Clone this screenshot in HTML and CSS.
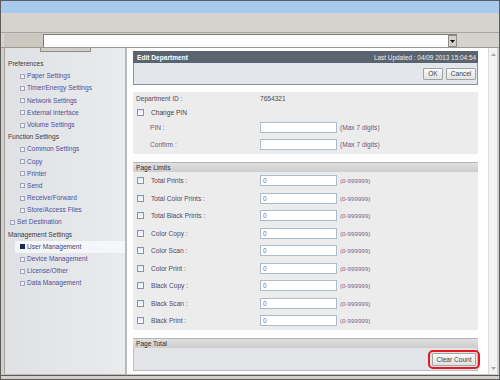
FILE: index.html
```html
<!DOCTYPE html>
<html lang="en">
<head>
  <meta charset="UTF-8">
  <meta name="viewport" content="width=device-width, initial-scale=1.0">
  <title>Edit Department</title>
  <link rel="stylesheet" href="styles.css">
</head>
<body>
  <div class="window">
    <div class="titlebar"></div>
    <div class="toolbar"></div>

    <div class="addressbar">
      <div class="addr-left"></div>
      <div class="addr-field">
        <span class="addr-drop">
          <svg width="5" height="3" viewBox="0 0 5 3"><path d="M0 0H5L2.5 3Z" fill="#111"/></svg>
        </span>
      </div>
    </div>

    <div class="workspace">
      <!-- Settings menu -->
      <nav class="sidebar">
        <div class="sidebar-tab"></div>
        <ul class="menu">
          <li class="menu-head">Preferences</li>
          <li class="menu-item"><span class="bullet"></span>Paper Settings</li>
          <li class="menu-item"><span class="bullet"></span>Timer/Energy Settings</li>
          <li class="menu-item"><span class="bullet"></span>Network Settings</li>
          <li class="menu-item"><span class="bullet"></span>External Interface</li>
          <li class="menu-item"><span class="bullet"></span>Volume Settings</li>
          <li class="menu-head">Function Settings</li>
          <li class="menu-item"><span class="bullet"></span>Common Settings</li>
          <li class="menu-item"><span class="bullet"></span>Copy</li>
          <li class="menu-item"><span class="bullet"></span>Printer</li>
          <li class="menu-item"><span class="bullet"></span>Send</li>
          <li class="menu-item"><span class="bullet"></span>Receive/Forward</li>
          <li class="menu-item"><span class="bullet"></span>Store/Access Files</li>
          <li class="menu-item top"><span class="bullet"></span>Set Destination</li>
          <li class="menu-head">Management Settings</li>
          <li class="menu-item active"><span class="bullet"></span>User Management</li>
          <li class="menu-item"><span class="bullet"></span>Device Management</li>
          <li class="menu-item"><span class="bullet"></span>License/Other</li>
          <li class="menu-item"><span class="bullet"></span>Data Management</li>
        </ul>
      </nav>

      <main class="main">
        <div class="panel">
          <div class="panel-head">
            <span class="panel-title">Edit Department</span>
            <span class="panel-updated">Last Updated : 04/09 2013 15:04:54</span>
          </div>
          <div class="panel-actions">
            <button class="btn btn-ok">OK</button>
            <button class="btn btn-cancel">Cancel</button>
          </div>

          <!-- Department -->
          <div class="section dept">
            <div class="row r1">
              <div class="label-cell"><span class="label id-label">Department ID :</span></div>
              <span class="value">7654321</span>
            </div>
            <div class="row r2">
              <div class="label-cell"><span class="check"></span><span class="label dark">Change PIN</span></div>
            </div>
            <div class="row r3">
              <div class="label-cell indent"><span class="label soft">PIN :</span></div>
              <input class="field" type="text" value="">
              <span class="note">(Max 7 digits)</span>
            </div>
            <div class="row r4">
              <div class="label-cell indent"><span class="label soft">Confirm :</span></div>
              <input class="field" type="text" value="">
              <span class="note">(Max 7 digits)</span>
            </div>
          </div>

          <!-- Page Limits -->
          <div class="section-head">Page Limits</div>
          <div class="section limits">
            <div class="row limit">
              <div class="label-cell"><span class="check"></span><span class="label">Total Prints :</span></div>
              <input class="field" type="text" value="0"><span class="range">(0-999999)</span>
            </div>
            <div class="row limit">
              <div class="label-cell"><span class="check"></span><span class="label">Total Color Prints :</span></div>
              <input class="field" type="text" value="0"><span class="range">(0-999999)</span>
            </div>
            <div class="row limit">
              <div class="label-cell"><span class="check"></span><span class="label">Total Black Prints :</span></div>
              <input class="field" type="text" value="0"><span class="range">(0-999999)</span>
            </div>
            <div class="row limit">
              <div class="label-cell"><span class="check"></span><span class="label">Color Copy :</span></div>
              <input class="field" type="text" value="0"><span class="range">(0-999999)</span>
            </div>
            <div class="row limit">
              <div class="label-cell"><span class="check"></span><span class="label">Color Scan :</span></div>
              <input class="field" type="text" value="0"><span class="range">(0-999999)</span>
            </div>
            <div class="row limit">
              <div class="label-cell"><span class="check"></span><span class="label">Color Print :</span></div>
              <input class="field" type="text" value="0"><span class="range">(0-999999)</span>
            </div>
            <div class="row limit">
              <div class="label-cell"><span class="check"></span><span class="label">Black Copy :</span></div>
              <input class="field" type="text" value="0"><span class="range">(0-999999)</span>
            </div>
            <div class="row limit">
              <div class="label-cell"><span class="check"></span><span class="label">Black Scan :</span></div>
              <input class="field" type="text" value="0"><span class="range">(0-999999)</span>
            </div>
            <div class="row limit">
              <div class="label-cell"><span class="check"></span><span class="label">Black Print :</span></div>
              <input class="field" type="text" value="0"><span class="range">(0-999999)</span>
            </div>
          </div>

          <!-- Page Total -->
          <div class="section-head total-head">Page Total</div>
          <div class="total-body">
            <span class="highlight"><button class="btn btn-clear">Clear Count</button></span>
          </div>
        </div>
      </main>

      <div class="scrollbar">
        <svg width="5" height="3" viewBox="0 0 5 3"><path d="M0 3H5L2.5 0Z" fill="#a8a8a8"/></svg>
        <svg width="5" height="3" viewBox="0 0 5 3"><path d="M0 0H5L2.5 3Z" fill="#a8a8a8"/></svg>
      </div>
    </div>

    <div class="statusbar"></div>
  </div>
</body>
</html>
```

FILE: styles.css
```css
* {
  box-sizing: border-box;
}

body {
  margin: 0;
  font-family: 'Liberation Sans', Arial, sans-serif;
  font-size: 6.6px;
}

.window {
  width: 500px;
  height: 380px;
  border: 1px solid #5c5c5c;
  background-color: #d4d0c8;
  display: flex;
  flex-direction: column;
  overflow: hidden;
}

.titlebar {
  height: 12px;
  background-color: #a6c9ed;
}

.toolbar {
  height: 20px;
  background-color: #d6d3ce;
  border-bottom: 1px solid #a9a59e;
}

/* Address row */
.addressbar {
  height: 15px;
  display: flex;
  border-bottom: 1px solid #9c988f;
  background-color: #d6d3ce;
}

.addr-left {
  width: 39px;
  margin-left: 3px;
  background-color: #ccc8c1;
}

.addr-field {
  width: 414px;
  margin-top: 1px;
  background-color: #fff;
  border-top: 1px solid #7b7b7b;
  border-left: 1px solid #7b7b7b;
  display: flex;
  justify-content: flex-end;
}

.addr-drop {
  width: 9px;
  height: 12px;
  background-color: #d4d0c8;
  border: 1px solid #8d8d8d;
  display: flex;
  align-items: center;
  justify-content: center;
}

.workspace {
  height: 327px;
  display: flex;
  padding: 0 2px 0 3px;
}

/* Sidebar menu */
.sidebar {
  width: 123px;
  flex-shrink: 0;
  background: linear-gradient(to right, #dfe1e4, #e9ebed);
  border-left: 1px solid #a5a5a5;
  border-right: 2px solid #b9b9b9;
  border-bottom: 1px solid #bdbdbd;
}

.sidebar-tab {
  width: 51px;
  height: 4px;
  margin-left: 35px;
  background-color: #d2cfc9;
  border: 1px solid #8f8f8f;
  border-top: none;
}

.menu {
  list-style: none;
  margin: 0;
  padding: 6px 0 0 0;
}

.menu li {
  height: 12.2px;
  line-height: 12.2px;
  white-space: nowrap;
  display: flex;
  align-items: center;
}

.menu-head {
  padding-left: 3px;
  color: #3a3a44;
}

.menu-item {
  padding-left: 15px;
  color: #50509a;
}

.menu-item.top {
  padding-left: 5px;
}

.menu-item.active {
  margin-left: 10px;
  padding-left: 5px;
  background-color: #f5f6f7;
  color: #3c3c80;
}

.bullet {
  width: 5px;
  height: 5px;
  margin-right: 2px;
  border: 1px solid #a4a4b8;
  background-color: #eeeef3;
}

.menu-item.active .bullet {
  border-color: #18285a;
  background-color: #2c3c74;
  box-shadow: inset 0 0 0 1px #18285a;
}

/* Main area */
.main {
  flex: 1;
  background-color: #fff;
  padding: 3px 0 0 6px;
  border-bottom: 1px solid #c8c8c8;
}

.panel {
  width: 345px;
}

.panel-head {
  height: 12px;
  background-color: #5b636e;
  color: #fff;
  display: flex;
  justify-content: space-between;
  align-items: center;
  padding: 0 2px 0 4px;
}

.panel-title {
  font-weight: bold;
}

.panel-updated {
  font-size: 6.4px;
  color: #eef0f2;
}

.panel-actions {
  height: 22px;
  background-color: #e3e6ea;
  border: 1px solid #8d939b;
  border-top: none;
  display: flex;
  justify-content: flex-end;
  align-items: center;
  gap: 3px;
  padding-right: 1px;
}

.btn {
  font-family: 'Liberation Sans', Arial, sans-serif;
  font-size: 6.6px;
  color: #444;
  height: 12px;
  padding: 0;
  background: linear-gradient(#fafafa, #e2e2e2);
  border: 1px solid #a2a2a2;
  border-radius: 1px;
}

.btn-ok {
  width: 20px;
}

.btn-cancel {
  width: 30px;
}

.section {
  background-color: #ececec;
}

.dept {
  margin-top: 7px;
  height: 62px;
}

.row {
  display: flex;
  align-items: center;
}

.r1 { height: 13px; }
.r2 { height: 15px; }
.r3 { height: 15px; }
.r4 { height: 18px; }

.label-cell {
  width: 127px;
  flex-shrink: 0;
  display: flex;
  align-items: center;
  padding-left: 4px;
}

.label-cell.indent {
  padding-left: 17px;
}

.id-label {
  margin-left: -1px;
}

.label {
  color: #514868;
}

.label.dark {
  color: #3c3c4c;
}

.label.soft {
  color: #6b5c7c;
}

.value {
  color: #4a4a4a;
}

.check {
  width: 7px;
  height: 7px;
  margin-right: 7px;
  border: 1px solid #8296ad;
  background: linear-gradient(#e6ebf0, #fdfdfd);
}

.field {
  width: 77px;
  height: 11px;
  margin: 0;
  padding: 0 0 0 2px;
  border: 1px solid #abbccf;
  background-color: #fff;
  font-family: 'Liberation Sans', Arial, sans-serif;
  font-size: 6.4px;
  color: #86688c;
  outline: none;
}

.note {
  margin-left: 3px;
  color: #6b5a7c;
}

.range {
  margin-left: 3px;
  font-size: 6.2px;
  color: #7c6486;
}

.section-head {
  margin-top: 8px;
  height: 10px;
  line-height: 9px;
  padding-left: 3px;
  color: #2f2f2f;
  background: linear-gradient(#e0e0e0, #cdcdcd);
  border-top: 1px solid #b6b6b6;
}

.limits {
  height: 158px;
}

.limit {
  height: 17.5px;
}

.total-head {
  margin-top: 8px;
}

.total-body {
  height: 23px;
  background-color: #e2e4e7;
  border: 1px solid #b9bdc3;
  border-top: none;
  display: flex;
  justify-content: flex-end;
  align-items: center;
}

/* red mark round the button */
.highlight {
  margin-right: -3px;
  padding: 1px 2px;
  border: 2px solid #e3191f;
  border-radius: 5px;
  display: flex;
}

.btn-clear {
  width: 44px;
  height: 13px;
}

.scrollbar {
  width: 9px;
  flex-shrink: 0;
  background-color: #f3f3f3;
  border-left: 1px solid #dadada;
  border-bottom: 1px solid #c8c8c8;
  display: flex;
  flex-direction: column;
  justify-content: space-between;
  align-items: center;
  padding: 5px 0 4px;
}

.statusbar {
  flex: 1;
  border-top: 1px solid #5c5c5c;
  background-color: #d4d0c8;
}
```
